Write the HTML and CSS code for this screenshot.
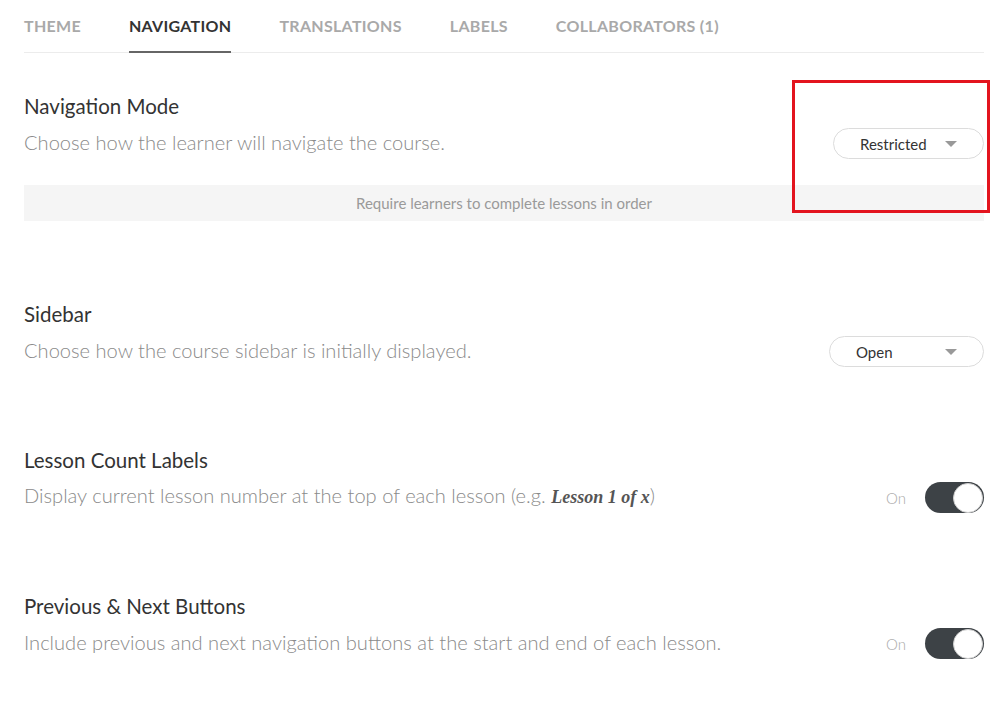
FILE: index.html
```html
<!DOCTYPE html>
<html>
<head>
<meta charset="utf-8">
<link rel="stylesheet" href="styles.css">
</head>
<body>
<div class="page">
  <nav class="tabs">
    <span class="tab">Theme</span>
    <span class="tab tab--active">Navigation</span>
    <span class="tab">Translations</span>
    <span class="tab">Labels</span>
    <span class="tab">Collaborators (1)</span>
  </nav>

  <section class="section section--first section--callout">
    <h2 class="title">Navigation Mode</h2>
    <div class="row">
      <p class="desc">Choose how the learner will navigate the course.</p>
      <div class="select select--restricted"><span>Restricted</span><i class="caret"></i></div>
    </div>
    <div class="note">Require learners to complete lessons in order</div>
  </section>

  <section class="section">
    <h2 class="title">Sidebar</h2>
    <div class="row">
      <p class="desc">Choose how the course sidebar is initially displayed.</p>
      <div class="select select--open"><span>Open</span><i class="caret"></i></div>
    </div>
  </section>

  <section class="section">
    <h2 class="title">Lesson Count Labels</h2>
    <div class="row">
      <p class="desc">Display current lesson number at the top of each lesson (e.g. <em class="sample">Lesson 1 of x</em>)</p>
      <div class="switch-wrap"><span class="switch-label">On</span><span class="switch"><span class="knob"></span></span></div>
    </div>
  </section>

  <section class="section">
    <h2 class="title">Previous &amp; Next Buttons</h2>
    <div class="row">
      <p class="desc">Include previous and next navigation buttons at the start and end of each lesson.</p>
      <div class="switch-wrap"><span class="switch-label">On</span><span class="switch"><span class="knob"></span></span></div>
    </div>
  </section>

  <div class="highlight"></div>
</div>
</body>
</html>
```

FILE: styles.css
```css
* { box-sizing: border-box; }
html, body { margin: 0; padding: 0; background: #fff; }
body { font-family: Lato, "Open Sans", sans-serif; color: #333; }

.page {
  position: relative;
  width: 999px;
  padding: 0 15px 0 24px;
}

.tabs {
  display: flex;
  gap: 48px;
  height: 53px;
  border-bottom: 1px solid #ececec;
  align-items: flex-start;
}
.tab {
  text-transform: uppercase;
  font-size: 16px;
  font-weight: 700;
  color: #a9a9a9;
  line-height: 20px;
  padding-top: 16px;
  height: 53px;
  letter-spacing: 0.3px;
}
.tab--active {
  color: #333;
  border-bottom: 2px solid #666;
}

.section { padding: 40px 0 41px; }
.section--first { padding-top: 41px; }
.section--callout { padding-bottom: 41px; }

.title {
  margin: 0;
  font-size: 20.5px;
  font-weight: 400;
  line-height: 24px;
  color: #333;
}
.row {
  display: flex;
  align-items: center;
  justify-content: space-between;
  margin-top: 10px;
  min-height: 31px;
}
.desc {
  margin: 0;
  padding-bottom: 3px;
  font-size: 20.1px;
  font-weight: 300;
  line-height: 24px;
  color: #8a8a8a;
}
.sample {
  font-family: "Liberation Serif", "DejaVu Serif", serif;
  font-weight: 700;
  font-style: italic;
  color: #555;
  font-size: 18px;
}

.select {
  display: flex;
  align-items: center;
  justify-content: space-between;
  height: 31px;
  border: 1px solid #dcdcdc;
  border-radius: 16px;
  padding: 0 26px 0 26px;
  font-size: 15px;
  color: #333;
}
.select--restricted { width: 151px; }
.select--open { width: 155px; }
.caret {
  width: 0; height: 0;
  border-left: 6px solid transparent;
  border-right: 6px solid transparent;
  border-top: 6px solid #999;
}

.note {
  margin-top: 26px;
  height: 36px;
  background: #f5f5f5;
  display: flex;
  align-items: center;
  justify-content: center;
  font-size: 15px;
  color: #9a9a9a;
}

.switch-wrap { display: flex; align-items: center; gap: 19px; }
.switch-label { font-size: 15px; color: #aaa; font-weight: 300; }
.switch {
  position: relative;
  width: 59px;
  height: 31px;
  border-radius: 16px;
  background: #3d4246;
  display: flex;
  justify-content: flex-end;
  align-items: center;
  padding-right: 1px;
}
.knob {
  width: 30px;
  height: 30px;
  border-radius: 50%;
  background: #fff;
  border: 1px solid #cfcfcf;
}

.highlight {
  position: absolute;
  left: 792px;
  top: 80px;
  width: 198px;
  height: 133px;
  border: 3px solid #e3141e;
}
```
